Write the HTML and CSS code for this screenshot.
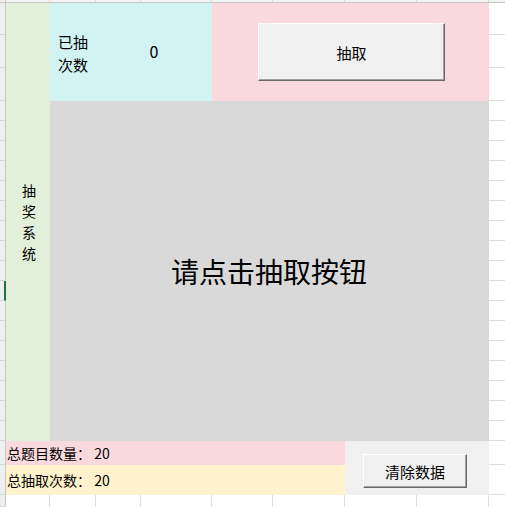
FILE: index.html
```html
<!DOCTYPE html>
<html lang="zh-CN">
<head>
<meta charset="utf-8">
<title>抽奖系统</title>
<link rel="stylesheet" href="styles.css">
</head>
<body>
<div class="sheet">
  <div class="corner"></div>
  <div class="colhead">
    <div class="ch w44"></div><div class="ch w46"></div><div class="ch w45"></div><div class="ch w71"></div><div class="ch w61"></div><div class="ch w72"></div><div class="ch w72"></div><div class="ch w72"></div><div class="ch w16"></div>
  </div>
  <div class="rowhead">
    <div class="rh h32"></div><div class="rh h33"></div><div class="rh h33"></div>
    <div class="rh h20"></div><div class="rh h20"></div><div class="rh h20"></div><div class="rh h20"></div><div class="rh h20"></div><div class="rh h20"></div><div class="rh h20"></div><div class="rh h20"></div><div class="rh h20"></div>
    <div class="rh h20 active"></div>
    <div class="rh h20"></div><div class="rh h20"></div><div class="rh h20"></div><div class="rh h20"></div><div class="rh h20"></div><div class="rh h20"></div><div class="rh h20"></div>
    <div class="rh h24"></div><div class="rh h30"></div><div class="rh h12"></div>
  </div>

  <div class="main">
    <div class="title"><span class="title-text">抽奖系统</span></div>
    <div class="count">
      <div class="count-label">已抽<br>次数</div>
      <div class="count-value">0</div>
    </div>
    <div class="draw">
      <button class="btn btn-draw" type="button">抽取</button>
    </div>
    <div class="stage">请点击抽取按钮</div>
    <div class="footer">
      <div class="stats">
        <div class="stat stat-total">总题目数量： 20</div>
        <div class="stat stat-drawn">总抽取次数： 20</div>
      </div>
      <div class="clear">
        <button class="btn btn-clear" type="button">清除数据</button>
      </div>
    </div>
  </div>

  <div class="gutter">
    <div class="gc h32"></div><div class="gc h33"></div><div class="gc h33"></div>
    <div class="gc h20"></div><div class="gc h20"></div><div class="gc h20"></div><div class="gc h20"></div><div class="gc h20"></div><div class="gc h20"></div><div class="gc h20"></div><div class="gc h20"></div><div class="gc h20"></div><div class="gc h20"></div><div class="gc h20"></div><div class="gc h20"></div><div class="gc h20"></div><div class="gc h20"></div><div class="gc h20"></div><div class="gc h20"></div><div class="gc h20"></div>
    <div class="gc h24"></div><div class="gc h30"></div>
  </div>
  <div class="bottom">
    <div class="bc w44"></div><div class="bc w46"></div><div class="bc w45"></div><div class="bc w71"></div><div class="bc w61"></div><div class="bc w72"></div><div class="bc w72"></div><div class="bc w72"></div><div class="bc w16"></div>
  </div>
</div>
</body>
</html>
```

FILE: styles.css
```css
* { box-sizing: border-box; }

html, body {
  margin: 0;
  padding: 0;
  background: #ffffff;
}

body {
  font-family: "Noto Sans CJK SC", "Noto Sans", sans-serif;
  color: #000;
  overflow: hidden;
}

.sheet {
  display: grid;
  grid-template-columns: 6px 483px 16px;
  grid-template-rows: 3px 492px 12px;
  width: 505px;
  height: 507px;
}

/* headers */
.corner {
  grid-column: 1;
  grid-row: 1;
  background: #efefef;
  border-right: 1px solid #c8c8c8;
  border-bottom: 1px solid #c8c8c8;
}

.colhead {
  grid-column: 2 / 4;
  grid-row: 1;
  display: flex;
}
.ch {
  height: 3px;
  background: #f3f3f3;
  border-right: 1px solid #d6d6d6;
  border-bottom: 1px solid #c8c8c8;
  flex: none;
}

.rowhead {
  grid-column: 1;
  grid-row: 2 / 4;
  display: flex;
  flex-direction: column;
}
.rh {
  flex: none;
  background: #efefef;
  border-bottom: 1px solid #d6d6d6;
  border-right: 1px solid #c8c8c8;
}
.rh.active {
  border-right: 2px solid #217346;
}

.gutter {
  grid-column: 3;
  grid-row: 2;
  display: flex;
  flex-direction: column;
}
.gc {
  flex: none;
  border-bottom: 1px solid #dcdcdc;
}

.bottom {
  grid-column: 2 / 4;
  grid-row: 3;
  display: flex;
}
.bc {
  flex: none;
  height: 12px;
  border-right: 1px solid #dcdcdc;
}

.w44 { width: 44px; }
.w45 { width: 45px; }
.w46 { width: 46px; }
.w71 { width: 71px; }
.w61 { width: 61px; }
.w72 { width: 72px; }
.w16 { width: 16px; border-right: none; }

.h12 { height: 12px; }
.h20 { height: 20px; }
.h24 { height: 24px; }
.h30 { height: 30px; }
.h32 { height: 32px; }
.h33 { height: 33px; }

/* main content */
.main {
  grid-column: 2;
  grid-row: 2;
  display: grid;
  grid-template-columns: 44px 162px 277px;
  grid-template-rows: 98px 340px 54px;
}

.title {
  grid-column: 1;
  grid-row: 1 / 3;
  background: #e2efda;
  display: flex;
  align-items: center;
  justify-content: center;
}
.title-text {
  width: 14px;
  font-size: 14px;
  line-height: 21px;
  text-align: center;
  margin-left: 2px;
}

.count {
  grid-column: 2;
  grid-row: 1;
  background: #d1f3f2;
  display: flex;
  align-items: center;
}
.count-label {
  width: 46px;
  padding-left: 8px;
  font-size: 15px;
  line-height: 23px;
  margin-top: 1px;
}
.count-value {
  flex: 1;
  text-align: center;
  font-size: 16px;
  margin-top: -2px;
}

.draw {
  grid-column: 3;
  grid-row: 1;
  background: #fad9de;
  padding: 20px 44px 17px 46px;
}

.btn {
  display: block;
  margin: 0;
  padding: 0;
  background: #f0f0f0;
  border: 1px solid;
  border-color: #ffffff #696969 #696969 #ffffff;
  box-shadow: inset -1px -1px 0 #a0a0a0;
  font-family: "Noto Sans CJK SC", sans-serif;
  color: #000;
}
.btn-draw {
  width: 187px;
  height: 58px;
  font-size: 15px;
}

.stage {
  grid-column: 2 / 4;
  grid-row: 2;
  background: #d9d9d9;
  display: flex;
  align-items: center;
  justify-content: center;
  font-size: 28px;
  padding-right: 1px;
}

.footer {
  grid-column: 1 / 4;
  grid-row: 3;
  display: flex;
}
.stats {
  width: 339px;
  display: flex;
  flex-direction: column;
}
.stat {
  display: flex;
  align-items: center;
  padding-left: 1px;
  font-family: "Noto Sans CJK SC", "Noto Sans", sans-serif;
  font-size: 14px;
  white-space: pre;
}
.stat-total {
  height: 24px;
  background: #fad9de;
}
.stat-drawn {
  height: 30px;
  background: #fff2cc;
}

.clear {
  flex: 1;
  background: #f0f0f0;
  padding: 13px 0 0 18px;
}
.btn-clear {
  width: 104px;
  height: 34px;
  font-size: 15px;
}
```
